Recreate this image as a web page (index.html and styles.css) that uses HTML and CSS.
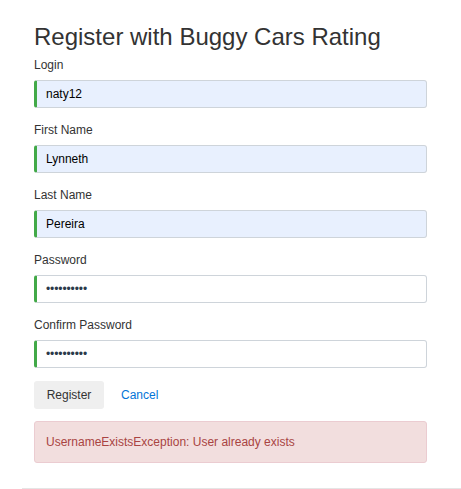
FILE: index.html
```html
<!DOCTYPE html>
<html>
<head>
<meta charset="utf-8">
<link rel="stylesheet" href="styles.css">
</head>
<body>
<div class="page">
  <h2 class="title">Register with Buggy Cars Rating</h2>
  <form class="form">
    <div class="group">
      <label class="label">Login</label>
      <div class="input autofill">naty12</div>
    </div>
    <div class="group">
      <label class="label">First Name</label>
      <div class="input autofill">Lynneth</div>
    </div>
    <div class="group">
      <label class="label">Last Name</label>
      <div class="input autofill">Pereira</div>
    </div>
    <div class="group">
      <label class="label">Password</label>
      <div class="input"><span class="dots">••••••••••</span></div>
    </div>
    <div class="group">
      <label class="label">Confirm Password</label>
      <div class="input"><span class="dots">••••••••••</span></div>
    </div>
    <div class="actions">
      <span class="btn">Register</span>
      <a class="link">Cancel</a>
    </div>
    <div class="alert">UsernameExistsException: User already exists</div>
  </form>
</div>
<div class="rule"></div>
</body>
</html>
```
FILE: styles.css
```css
html, body {
  margin: 0;
  padding: 0;
  background: #fff;
}
body {
  font-family: "Liberation Sans", Arial, sans-serif;
  font-size: 12px;
  line-height: 18px;
  color: #333;
}
.page {
  padding: 0 34px;
}
.title {
  margin: 0;
  padding-top: 22px;
  font-size: 24px;
  font-weight: 400;
  line-height: 29px;
  color: #333;
  margin-bottom: 5px;
}
.form {
  display: flex;
  flex-direction: column;
}
.group {
  display: flex;
  flex-direction: column;
  margin-bottom: 13px;
}
.label {
  display: block;
  margin-bottom: 6px;
  height: 18px;
}
.input {
  box-sizing: border-box;
  height: 28px;
  border: 1px solid #ced4da;
  border-left: 3px solid #42a948;
  border-radius: 3px;
  padding: 0 9px;
  display: flex;
  align-items: center;
  background: #fff;
  color: #000;
  font-size: 12px;
}
.input.autofill {
  background: #e8f0fe;
}
.dots {
  font-size: 12px;
  letter-spacing: -0.1px;
  color: #2b3a4a;
}
.actions {
  display: flex;
  align-items: center;
  margin-top: 0;
}
.btn {
  box-sizing: border-box;
  width: 70px;
  height: 28px;
  display: flex;
  align-items: center;
  justify-content: center;
  background: #efefef;
  border-radius: 3px;
  color: #333;
}
.link {
  margin-left: 17px;
  color: #0275d8;
}
.alert {
  box-sizing: border-box;
  margin-top: 12px;
  height: 42px;
  padding: 0 11px;
  display: flex;
  align-items: center;
  background: #f2dede;
  border: 1px solid #ebccd1;
  border-radius: 3px;
  color: #a94442;
}
.rule {
  margin: 25px 0 0 22px;
  border-top: 1px solid #e5e5e5;
}
```
